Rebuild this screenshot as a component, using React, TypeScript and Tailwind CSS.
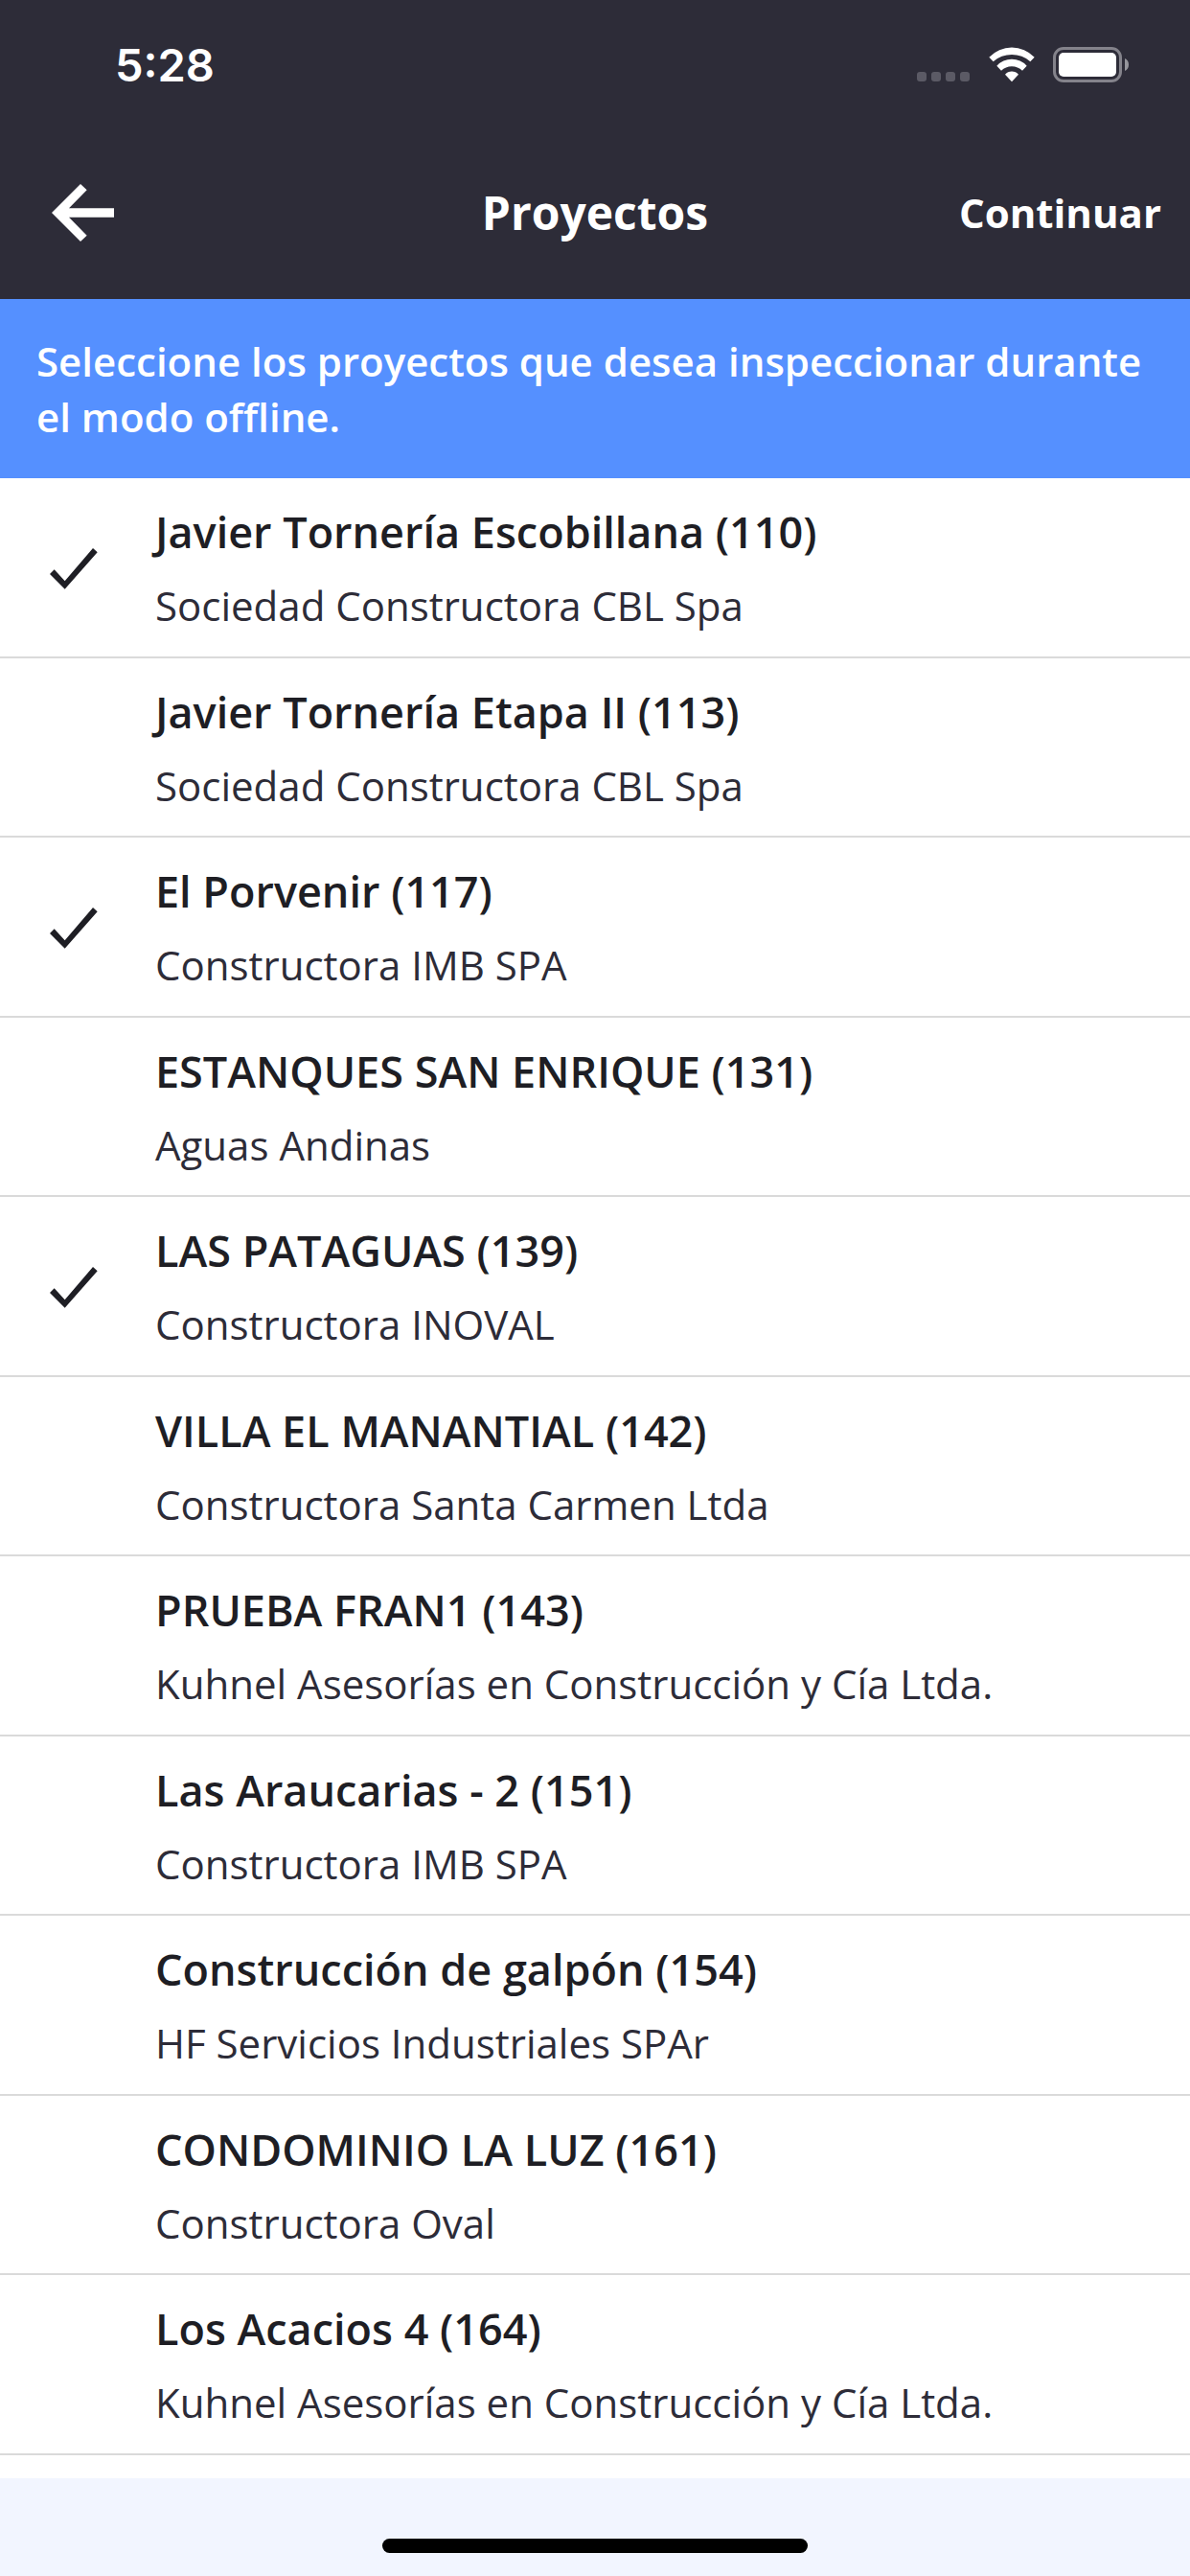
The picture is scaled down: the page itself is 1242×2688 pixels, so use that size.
import { useState } from 'react';

type Project = { id: number; name: string; company: string };

const PROJECTS: Project[] = [
  { id: 110, name: 'Javier Tornería Escobillana', company: 'Sociedad Constructora CBL Spa' },
  { id: 113, name: 'Javier Tornería Etapa II', company: 'Sociedad Constructora CBL Spa' },
  { id: 117, name: 'El Porvenir', company: 'Constructora IMB SPA' },
  { id: 131, name: 'ESTANQUES SAN ENRIQUE', company: 'Aguas Andinas' },
  { id: 139, name: 'LAS PATAGUAS', company: 'Constructora INOVAL' },
  { id: 142, name: 'VILLA EL MANANTIAL', company: 'Constructora Santa Carmen Ltda' },
  { id: 143, name: 'PRUEBA FRAN1', company: 'Kuhnel Asesorías en Construcción y Cía Ltda.' },
  { id: 151, name: 'Las Araucarias - 2', company: 'Constructora IMB SPA' },
  { id: 154, name: 'Construcción de galpón', company: 'HF Servicios Industriales SPAr' },
  { id: 161, name: 'CONDOMINIO LA LUZ', company: 'Constructora Oval' },
  { id: 164, name: 'Los Acacios 4', company: 'Kuhnel Asesorías en Construcción y Cía Ltda.' },
];

function StatusBar() {
  return (
    <div className="flex h-[132px] items-start justify-between pt-10 pr-16 pl-[120px]">
      <span className="font-['Inter',sans-serif] text-[47px] leading-[56px] font-semibold">5:28</span>
      <div className="flex items-end pt-[9px]">
        {/* No signal: four dim dots on the baseline. */}
        <div className="mr-5 mb-px flex gap-[5px]">
          {[0, 1, 2, 3].map((i) => (
            <span key={i} className="size-[10px] rounded-[3px] bg-[#5b5a65]" />
          ))}
        </div>
        <svg width="48" height="37" viewBox="0 0 144 111" fill="currentColor" className="mr-[19px]" aria-hidden="true">
          <path d="M1 32A98 98 0 0 1 143 32L130 46A87 87 0 0 0 14 46Z" />
          <path d="M25 59A64 64 0 0 1 119 59L105 74A47 47 0 0 0 39 74Z" />
          <path d="M51 86A28 28 0 0 1 93 86L72 109Z" />
        </svg>
        <svg width="79" height="37" viewBox="0 0 79 37" aria-hidden="true">
          <rect x="1.5" y="1.5" width="69" height="34" rx="9.5" fill="none" stroke="#84838b" strokeWidth="3" />
          <rect x="6" y="6" width="60" height="25" rx="5" fill="#fff" />
          <path d="M75 12C77.5 13 79 15.500 79 18.500S77.500 24 75 25Z" fill="#96969c" />
        </svg>
      </div>
    </div>
  );
}

function Header() {
  return (
    <div className="grid h-[180px] grid-cols-[1fr_auto_1fr] items-center px-[30px]">
      <button type="button" aria-label="Volver" className="justify-self-start pl-6">
        <svg width="65" height="60" viewBox="0 0 195 180" fill="currentColor" aria-hidden="true">
          <path d="M0 90L90 0L110 19L54 76H195V104H54L110 161L90 180Z" />
        </svg>
      </button>
      <h1 className="text-[48px] leading-[66px] font-bold">Proyectos</h1>
      <button type="button" className="justify-self-end text-[42px] leading-[58px] font-bold">
        Continuar
      </button>
    </div>
  );
}

function ProjectRow({
  project,
  checked,
  onToggle,
}: {
  project: Project;
  checked: boolean;
  onToggle: () => void;
}) {
  return (
    <li className="border-b-2 border-[#dadada] pt-[26px] odd:pb-6 even:pb-[23px]">
      <label className="flex cursor-pointer items-center">
        <input type="checkbox" className="peer sr-only" checked={checked} onChange={onToggle} />
        <span className="flex w-[162px] shrink-0 pl-[52px] opacity-0 peer-checked:opacity-100">
          <svg width="50" height="43" viewBox="0 0 150 129" fill="#1e1e24" aria-hidden="true">
            <path d="M0 81L14 67L47 103L135 0L149 13L47 128Z" />
          </svg>
        </span>
        <span className="flex min-w-0 flex-col gap-[18px]">
          <span className="text-[45px] leading-[60px] font-semibold text-[#1e1e24]">
            {project.name} ({project.id})
          </span>
          <span className="text-[42px] leading-[58px] text-[#2d2c38]">{project.company}</span>
        </span>
      </label>
    </li>
  );
}

export default function App() {
  const [selected, setSelected] = useState<number[]>([110, 117, 139]);

  const toggle = (id: number) =>
    setSelected((prev) => (prev.includes(id) ? prev.filter((x) => x !== id) : [...prev, id]));

  return (
    <div className="flex min-h-screen flex-col bg-white font-['Open_Sans',sans-serif]">
      <header className="bg-[#2d2c38] text-white">
        <StatusBar />
        <Header />
      </header>
      <p className="bg-[#5590ff] px-[38px] pt-9 pb-[35px] text-[42px] leading-[58px] font-semibold text-white">
        Seleccione los proyectos que desea inspeccionar durante el modo offline.
      </p>
      <main className="flex-1">
        <ul>
          {PROJECTS.map((p) => (
            <ProjectRow
              key={p.id}
              project={p}
              checked={selected.includes(p.id)}
              onToggle={() => toggle(p.id)}
            />
          ))}
        </ul>
      </main>
      <footer className="flex h-[102px] items-end justify-center bg-[#f2f5ff] pb-6">
        <div className="h-[15px] w-[444px] rounded-full bg-black" />
      </footer>
    </div>
  );
}
